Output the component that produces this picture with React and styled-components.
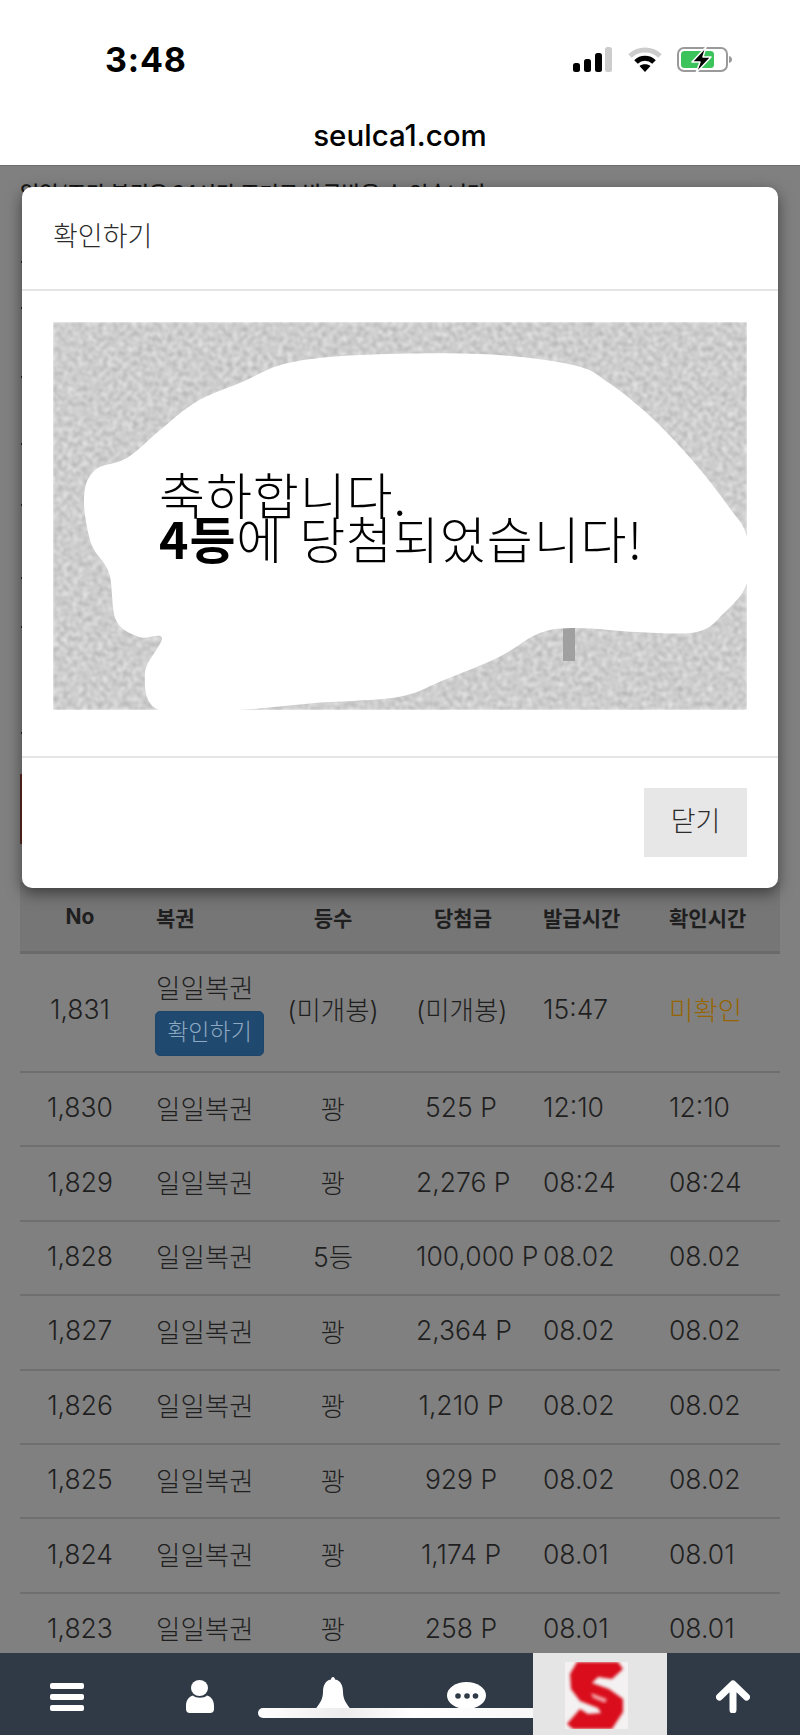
import styled, { createGlobalStyle } from 'styled-components';

const KR = '"Noto Sans CJK KR", "Liberation Sans", sans-serif';

const GlobalStyle = createGlobalStyle`
  html, body {
    margin: 0;
    padding: 0;
    background: #fff;
  }
  * {
    box-sizing: border-box;
  }
`;

const rows = [
  { no: '1,830', rank: '꽝', prize: '525 P', issued: '12:10', checked: '12:10' },
  { no: '1,829', rank: '꽝', prize: '2,276 P', issued: '08:24', checked: '08:24' },
  { no: '1,828', rank: '5등', prize: '100,000 P', issued: '08.02', checked: '08.02' },
  { no: '1,827', rank: '꽝', prize: '2,364 P', issued: '08.02', checked: '08.02' },
  { no: '1,826', rank: '꽝', prize: '1,210 P', issued: '08.02', checked: '08.02' },
  { no: '1,825', rank: '꽝', prize: '929 P', issued: '08.02', checked: '08.02' },
  { no: '1,824', rank: '꽝', prize: '1,174 P', issued: '08.01', checked: '08.01' },
  { no: '1,823', rank: '꽝', prize: '258 P', issued: '08.01', checked: '08.01' },
];

// gaps between the bits of text that peek out left of the modal
const noticeGaps = [52, 44, 67, 65, 59, 71, 47, 104];

const blob = [
  [308, 33], [428, 32], [520, 43], [556, 61], [598, 95], [639, 138], [676, 185],
  [694, 215], [694, 261], [671, 291], [644, 310], [584, 310], [524, 306], [487, 311],
  [446, 335], [391, 358], [345, 375], [262, 381], [184, 388], [106, 388], [92, 351],
  [109, 316], [86, 315], [63, 298], [56, 251], [38, 221], [31, 175], [42, 148],
  [74, 136], [106, 109], [143, 80], [189, 60], [235, 41],
];

const smoothPath = pts => {
  const n = pts.length;
  let d = `M${pts[0][0]} ${pts[0][1]}`;
  for (let i = 0; i < n; i++) {
    const p0 = pts[(i - 1 + n) % n];
    const p1 = pts[i];
    const p2 = pts[(i + 1) % n];
    const p3 = pts[(i + 2) % n];
    const c1x = p1[0] + (p2[0] - p0[0]) / 6;
    const c1y = p1[1] + (p2[1] - p0[1]) / 6;
    const c2x = p2[0] - (p3[0] - p1[0]) / 6;
    const c2y = p2[1] - (p3[1] - p1[1]) / 6;
    d += ` C${c1x} ${c1y} ${c2x} ${c2y} ${p2[0]} ${p2[1]}`;
  }
  return d + ' Z';
};

const SignalIcon = () => (
  <svg width="40" height="26" viewBox="0 0 40 26">
    <rect x="0" y="16" width="7" height="9" rx="2.5" fill="#000" />
    <rect x="11" y="12" width="7" height="13" rx="2.5" fill="#000" />
    <rect x="22" y="6" width="7" height="19" rx="2.5" fill="#000" />
    <rect x="32" y="0" width="7" height="25" rx="2.5" fill="#ccc" />
  </svg>
);

const WifiIcon = () => (
  <svg width="34" height="26" viewBox="0 0 34 26">
    <path d="M2 9 C10 1 24 1 32 9" fill="none" stroke="#ccc" strokeWidth="5" />
    <path d="M8 15 C13 10 21 10 26 15" fill="none" stroke="#000" strokeWidth="5" />
    <path d="M11.5 19 C14 16.5 20 16.5 22.5 19 L17 25 Z" fill="#000" />
  </svg>
);

const BatteryIcon = () => (
  <svg width="57" height="26" viewBox="0 0 57 26">
    <rect x="1" y="1" width="49" height="23" rx="6" fill="#fff" stroke="#9a9a9a" strokeWidth="2" />
    <rect x="4" y="4" width="33" height="17" rx="3.5" fill="#3cc35c" />
    <path d="M52 9 Q55 10 55 12.5 Q55 15 52 16 Z" fill="#9a9a9a" />
    <path
      d="M29 0 L15 15 L23 15 L19 26 L34 10 L26 10 Z"
      fill="#000"
      stroke="#fff"
      strokeWidth="1.5"
      strokeLinejoin="round"
    />
  </svg>
);

const BarsIcon = () => (
  <svg width="34" height="28" viewBox="0 0 34 28">
    <rect x="0" y="0" width="34" height="6" rx="2" fill="#fff" />
    <rect x="0" y="11" width="34" height="6" rx="2" fill="#fff" />
    <rect x="0" y="22" width="34" height="6" rx="2" fill="#fff" />
  </svg>
);

const PersonIcon = () => (
  <svg width="28" height="33" viewBox="0 0 28 33">
    <ellipse cx="13.5" cy="8" rx="8.5" ry="8" fill="#fff" />
    <path
      d="M0 26 C0 20 3 16.5 7 15.5 C10 18.5 18 18.5 21 15.5 C25 16.5 28 20 28 26 L28 29 Q28 33 24 33 L4 33 Q0 33 0 29 Z"
      fill="#fff"
    />
  </svg>
);

const BellIcon = () => (
  <svg width="36" height="34" viewBox="0 0 36 34">
    <path
      d="M18 0 C19.5 0 20 1.5 20 2.5 C26 3.5 28 9 28 15 C28 23 32 27 36 33 L0 33 C4 27 8 23 8 15 C8 9 10 3.5 16 2.5 C16 1.5 16.5 0 18 0 Z"
      fill="#fff"
    />
  </svg>
);

const ChatIcon = () => (
  <svg width="40" height="29" viewBox="0 0 40 29">
    <ellipse cx="19.5" cy="13.5" rx="19.5" ry="13.5" fill="#fff" />
    <circle cx="11" cy="14" r="2.8" fill="#303a47" />
    <circle cx="20" cy="14" r="2.8" fill="#303a47" />
    <circle cx="28.5" cy="14" r="2.8" fill="#303a47" />
  </svg>
);

const ArrowIcon = () => (
  <svg width="34" height="33" viewBox="0 0 34 33">
    <path
      d="M17 30 V5 M3.5 17 L17 4 L30.5 17"
      fill="none"
      stroke="#fff"
      strokeWidth="7"
      strokeLinecap="round"
      strokeLinejoin="round"
    />
  </svg>
);

const LogoS = () => (
  <svg width="63" height="67" viewBox="0 0 63 67">
    <defs>
      <filter id="logoBlur" x="-10%" y="-10%" width="120%" height="120%">
        <feGaussianBlur stdDeviation="1.6" />
      </filter>
    </defs>
    <rect width="63" height="67" fill="#f3f1f1" />
    <path
      d="M5 12 L12 0 L53 0 L58 7 L47 17 L33 15 L27 21 L44 27 L58 37 L58 50 L47 67 L8 67 L2 62 L15 47 L23 52 L36 51 L33 46 L15 39 L6 27 Z"
      fill="#d9111a"
      filter="url(#logoBlur)"
    />
    <path d="M26 31 L42 37 L40 41 L28 36 Z" fill="#f2a0a4" filter="url(#logoBlur)" />
  </svg>
);

const ScratchCard = () => (
  <CardArt viewBox="0 0 694 388" preserveAspectRatio="none">
    <defs>
      <filter id="grain" x="0" y="0" width="100%" height="100%" colorInterpolationFilters="sRGB">
        <feTurbulence type="fractalNoise" baseFrequency="0.2" numOctaves="4" seed="7" />
        <feColorMatrix
          type="matrix"
          values="0.3 0 0 0 0.655  0.3 0 0 0 0.655  0.3 0 0 0 0.655  0 0 0 0 1"
        />
        <feGaussianBlur stdDeviation="0.8" />
      </filter>
    </defs>
    <rect width="694" height="388" fill="#cccccc" filter="url(#grain)" />
    <rect x="510" y="305" width="12" height="34" fill="#a0a0a0" />
    <path d={smoothPath(blob)} fill="#fff" />
  </CardArt>
);

const App = () => {
  return (
    <>
      <GlobalStyle />
      <Screen>
        <StatusBar>
          <Clock>3:48</Clock>
          <StatusIcons>
            <SignalIcon />
            <WifiIcon />
            <BatteryIcon />
          </StatusIcons>
        </StatusBar>
        <UrlBar>seulca1.com</UrlBar>

        <Viewport>
          <Page>
            <Notice>
              <NoticeTitle>일일/주간 복권은 24시간 주기로 발급받을 수 있습니다.</NoticeTitle>
              {noticeGaps.map((gap, i) => (
                <NoticeDot key={i} $gap={gap} />
              ))}
            </Notice>
            <Banner />
            <TableHead>
              <Cell>No</Cell>
              <Cell $left>복권</Cell>
              <Cell>등수</Cell>
              <Cell>당첨금</Cell>
              <Cell $left>발급시간</Cell>
              <Cell $left>확인시간</Cell>
            </TableHead>
            <TallRow>
              <Cell>1,831</Cell>
              <TicketCell>
                일일복권
                <CheckButton>확인하기</CheckButton>
              </TicketCell>
              <Cell>(미개봉)</Cell>
              <Cell>(미개봉)</Cell>
              <Cell $left>15:47</Cell>
              <Cell $left $pending>미확인</Cell>
            </TallRow>
            {rows.map(row => (
              <Row key={row.no}>
                <Cell>{row.no}</Cell>
                <Cell $left>일일복권</Cell>
                <Cell>{row.rank}</Cell>
                <Cell>{row.prize}</Cell>
                <Cell $left>{row.issued}</Cell>
                <Cell $left>{row.checked}</Cell>
              </Row>
            ))}
          </Page>

          <Modal>
            <ModalHeader>확인하기</ModalHeader>
            <ModalBody>
              <Card>
                <ScratchCard />
                <CardText>
                  축하합니다.
                  <br />
                  <strong>4등</strong>에 당첨되었습니다!
                </CardText>
              </Card>
            </ModalBody>
            <ModalFooter>
              <CloseButton>닫기</CloseButton>
            </ModalFooter>
          </Modal>

          <BottomNav>
            <NavItem><BarsIcon /></NavItem>
            <NavItem><PersonIcon /></NavItem>
            <NavItem $up><BellIcon /></NavItem>
            <NavItem><ChatIcon /></NavItem>
            <LogoCell><LogoS /></LogoCell>
            <NavItem><ArrowIcon /></NavItem>
            <HomeIndicator />
          </BottomNav>
        </Viewport>
      </Screen>
    </>
  );
};

const Screen = styled.div`
  width: 800px;
  height: 1735px;
  display: flex;
  flex-direction: column;
  overflow: hidden;
  background: #fff;
`;

const StatusBar = styled.div`
  height: 105px;
  flex: none;
  padding: 43px 66px 0 105px;
  display: flex;
  justify-content: space-between;
  align-items: flex-start;
`;

const Clock = styled.div`
  font-family: Inter, "Liberation Sans", sans-serif;
  font-size: 34px;
  font-weight: 700;
  line-height: 34px;
  letter-spacing: 0.8px;
  color: #000;
`;

const StatusIcons = styled.div`
  display: flex;
  align-items: center;
  gap: 15px;
  padding-top: 4px;
`;

const UrlBar = styled.div`
  height: 60px;
  flex: none;
  display: flex;
  justify-content: center;
  align-items: flex-start;
  padding-top: 11px;
  font-family: Inter, "Liberation Sans", sans-serif;
  font-size: 29.5px;
  font-weight: 500;
  line-height: 38px;
  color: #000;
`;

const Viewport = styled.div`
  position: relative;
  flex: 1;
  overflow: hidden;
  background: #808080;
  border-top: 1px solid #6d6d6d;
  font-family: ${KR};
  color: #1f1f1f;
`;

const Page = styled.div`
  padding: 0 20px;
`;

const Notice = styled.div`
  height: 608px;
  overflow: hidden;
`;

const NoticeTitle = styled.div`
  padding-top: 9px;
  font-size: 21px;
  line-height: 34px;
  font-weight: 500;
  white-space: nowrap;
  color: #151515;
`;

const NoticeDot = styled.div`
  width: 2px;
  height: 2px;
  margin: ${({ $gap }) => $gap}px 0 0 1px;
  background: #222;
`;

const Banner = styled.div`
  width: 300px;
  height: 70px;
  margin-bottom: 38px;
  background: #5f2a20;
`;

const Row = styled.div`
  display: grid;
  grid-template-columns: 120px 128px 130px 130px 132px 120px;
  align-items: center;
  height: 74.4px;
  padding-bottom: 4px;
  border-bottom: 2px solid #6f6f6f;
  font-family: Inter, ${KR};
  font-size: 26.5px;
  font-weight: 300;
  white-space: nowrap;

  > :nth-child(2) {
    padding-left: 16px;
  }
  > :nth-child(4) {
    padding: 0 22px 0 18px;
  }
  > :nth-child(5) {
    padding-left: 15px;
  }
  > :nth-child(6) {
    padding-left: 9px;
  }
`;

const TableHead = styled(Row)`
  height: 72px;
  padding-bottom: 0;
  background: #767676;
  border-bottom: 3px solid #6a6a6a;
  font-size: 21px;
  font-weight: 700;

  > :nth-child(4) {
    padding: 0 18px;
  }
`;

const TallRow = styled(Row)`
  height: 119px;
  padding-bottom: 8px;
`;

const Cell = styled.div`
  text-align: ${({ $left }) => ($left ? 'left' : 'center')};
  color: ${({ $pending }) => ($pending ? '#966400' : 'inherit')};
`;

const TicketCell = styled.div`
  display: flex;
  flex-direction: column;
  align-items: flex-start;
  gap: 5px;
  margin-top: 8px;
  line-height: 36px;
`;

const CheckButton = styled.div`
  width: 109px;
  height: 45px;
  margin-left: -1px;
  border: 1px solid #1c4567;
  border-radius: 5px;
  background: #20496f;
  color: #8eaac2;
  font-size: 23px;
  line-height: 41px;
  text-align: center;
`;

const Modal = styled.div`
  position: absolute;
  top: 21px;
  left: 22px;
  width: 756px;
  height: 701px;
  display: flex;
  flex-direction: column;
  background: #fff;
  border-radius: 10px;
  box-shadow: 0 5px 15px rgba(0, 0, 0, 0.5);
  color: #2b2b2b;
`;

const ModalHeader = styled.div`
  height: 104px;
  padding: 0 31px 8px;
  display: flex;
  align-items: center;
  border-bottom: 2px solid #e5e5e5;
  font-size: 27px;
  font-weight: 300;
`;

const ModalBody = styled.div`
  height: 467px;
  padding: 31px 31px 0;
  border-bottom: 2px solid #e5e5e5;
`;

const Card = styled.div`
  position: relative;
  height: 388px;
`;

const CardArt = styled.svg`
  display: block;
  width: 100%;
  height: 100%;
`;

const CardText = styled.div`
  position: absolute;
  left: 106px;
  top: 149px;
  font-size: 50px;
  font-weight: 300;
  letter-spacing: 0.9px;
  word-spacing: 4px;
  line-height: 44px;
  color: #000;
  white-space: nowrap;

  strong {
    font-weight: 700;
  }
`;

const ModalFooter = styled.div`
  flex: 1;
  padding: 30px 31px 31px;
  display: flex;
  justify-content: flex-end;
  align-items: flex-start;
`;

const CloseButton = styled.div`
  width: 103px;
  height: 69px;
  background: #e7e7e7;
  font-size: 27px;
  font-weight: 300;
  line-height: 63px;
  text-align: center;
`;

const BottomNav = styled.div`
  position: absolute;
  left: 0;
  right: 0;
  bottom: 0;
  height: 82px;
  display: grid;
  grid-template-columns: repeat(6, 1fr);
  background: #303a47;
`;

const NavItem = styled.div`
  display: flex;
  justify-content: center;
  align-items: center;
  padding-top: ${({ $up }) => ($up ? '0' : '5px')};

  svg {
    display: block;
  }
`;

const LogoCell = styled(NavItem)`
  position: relative;
  z-index: 1;
  padding: 3px 6px 0 0;
  background: #e5e5e5;
`;

const HomeIndicator = styled.div`
  position: absolute;
  left: 258px;
  top: 55px;
  width: 284px;
  height: 10px;
  border-radius: 5px;
  background: linear-gradient(90deg, #fff, #ececec 30%, #fff 55%, #f7f7f7);
`;

export default App;
